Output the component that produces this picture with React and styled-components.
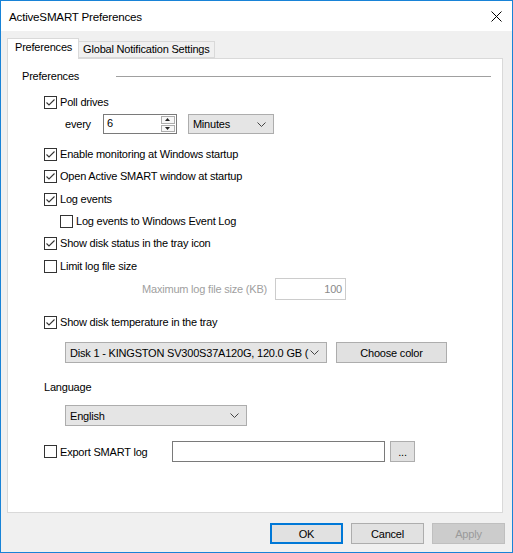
import React from 'react'
import styled, { createGlobalStyle } from 'styled-components'

const GlobalStyle = createGlobalStyle`
  body {
    margin: 0;
    background: #ffffff;
    font-family: "Liberation Sans", Arial, sans-serif;
    font-size: 11px;
    letter-spacing: -0.2px;
    color: #000;
  }
  * { box-sizing: border-box; }
`

const Window = styled.div`
  width: 513px;
  height: 553px;
  border: 1px solid #1883d7;
  background: #f0f0f0;
  display: flex;
  flex-direction: column;
`

const TitleBar = styled.div`
  height: 30px;
  background: #ffffff;
  display: flex;
  align-items: center;
  justify-content: space-between;
  padding: 0 10px 0 8px;
  font-size: 11.6px;
`

const Body = styled.div`
  padding: 7px 9px 0 6px;
  display: flex;
  flex-direction: column;
`

const TabStrip = styled.div`
  height: 20px;
  display: flex;
  align-items: flex-end;
  position: relative;
  z-index: 1;
`

const Tab = styled.div`
  height: ${(p) => (p.$active ? '21px' : '17px')};
  margin-bottom: ${(p) => (p.$active ? '-1px' : '0')};
  padding: ${(p) => (p.$active ? '2px 6px 0 7px' : '1px 4px 0 4px')};
  background: ${(p) => (p.$active ? '#ffffff' : '#f0f0f0')};
  border: 1px solid #d9d9d9;
  border-bottom: ${(p) => (p.$active ? 'none' : '1px solid #d9d9d9')};
  border-left: ${(p) => (p.$active ? '1px solid #d9d9d9' : 'none')};
  display: flex;
  align-items: flex-start;
`

const Panel = styled.div`
  height: 455px;
  background: #ffffff;
  border: 1px solid #d9d9d9;
  padding: 0 0 0 14px;
  display: flex;
  flex-direction: column;
`

const Row = styled.div`
  display: flex;
  align-items: center;
  height: ${(p) => p.$h || 22}px;
  margin-top: ${(p) => p.$mt || 0}px;
  padding-left: ${(p) => p.$indent || 0}px;
`

const GroupLine = styled.div`
  flex: 1;
  height: 1px;
  background: #a0a0a0;
  margin: 1px 11px 0 37px;
`

const Box = styled.span`
  width: 13px;
  height: 13px;
  border: 1px solid #333333;
  background: #ffffff;
  display: inline-flex;
  align-items: center;
  justify-content: center;
  flex: none;
  margin-right: 3px;
`

const Label = styled.span`
  color: ${(p) => (p.$disabled ? '#a0a0a0' : '#000')};
  margin-right: ${(p) => p.$mr || 0}px;
  width: ${(p) => (p.$w ? `${p.$w}px` : 'auto')};
  text-align: ${(p) => (p.$right ? 'right' : 'left')};
  flex: none;
`

const SpinBox = styled.div`
  width: 74px;
  height: 20px;
  border: 1px solid #7a7a7a;
  background: #ffffff;
  display: flex;
  margin-left: 12px;
`

const SpinText = styled.div`
  flex: 1;
  padding: 2px 0 0 3px;
`

const SpinButtons = styled.div`
  width: 16px;
  display: flex;
  flex-direction: column;
  padding: 1px;
  gap: 1px;
`

const SpinButton = styled.div`
  flex: 1;
  border: 1px solid #adadad;
  background: #f7f7f7;
  display: flex;
  align-items: center;
  justify-content: center;
`

const Combo = styled.div`
  width: ${(p) => p.$w}px;
  height: ${(p) => p.$h || 21}px;
  margin-left: ${(p) => p.$ml || 0}px;
  background: #e5e5e5;
  border: 1px solid #adadad;
  display: flex;
  align-items: center;
  justify-content: space-between;
  padding: 0 7px 0 4px;
  white-space: nowrap;
  overflow: hidden;
`

const Field = styled.div`
  width: ${(p) => p.$w}px;
  height: ${(p) => p.$h || 21}px;
  margin-left: ${(p) => p.$ml || 0}px;
  background: #ffffff;
  border: 1px solid ${(p) => (p.$disabled ? '#cccccc' : '#7a7a7a')};
  color: #8a8a8a;
  display: flex;
  align-items: center;
  justify-content: flex-end;
  padding-right: 3px;
`

const Button = styled.div`
  width: ${(p) => p.$w || 73}px;
  height: ${(p) => p.$h || 21}px;
  margin-left: ${(p) => p.$ml || 0}px;
  background: ${(p) => (p.$disabled ? '#cccccc' : '#e1e1e1')};
  border: ${(p) => (p.$default ? '2px solid #0078d7' : p.$disabled ? '1px solid #bfbfbf' : '1px solid #adadad')};
  color: ${(p) => (p.$disabled ? '#9a9a9a' : '#000')};
  display: flex;
  align-items: center;
  justify-content: center;
`

const Footer = styled.div`
  display: flex;
  justify-content: flex-end;
  gap: 8px;
  padding: 10px 7px 0 0;
`

const Check = () => (
  <svg width="11" height="11" viewBox="0 0 11 11">
    <polyline points="1.5,5.5 4,8 9.5,2.5" fill="none" stroke="#333" strokeWidth="1.1" />
  </svg>
)

const Chevron = () => (
  <svg width="9" height="5" viewBox="0 0 9 5" style={{ flex: 'none' }}>
    <polyline points="0.5,0.5 4.5,4.5 8.5,0.5" fill="none" stroke="#444" strokeWidth="1" />
  </svg>
)

const Arrow = ({ down }) => (
  <svg width="5" height="3" viewBox="0 0 5 3">
    <polygon points={down ? '0,0 5,0 2.5,3' : '0,3 5,3 2.5,0'} fill="#222" />
  </svg>
)

const CheckRow = ({ checked, label, indent = 22, mt, h }) => (
  <Row $indent={indent} $mt={mt} $h={h}>
    <Box>{checked && <Check />}</Box>
    <Label>{label}</Label>
  </Row>
)

const App = () => {
  return (
    <>
      <GlobalStyle />
      <Window>
        <TitleBar>
          <span>ActiveSMART Preferences</span>
          <svg width="11" height="11" viewBox="0 0 11 11">
            <line x1="0.5" y1="0.5" x2="10.5" y2="10.5" stroke="#000" strokeWidth="1" />
            <line x1="10.5" y1="0.5" x2="0.5" y2="10.5" stroke="#000" strokeWidth="1" />
          </svg>
        </TitleBar>
        <Body>
          <TabStrip>
            <Tab $active>Preferences</Tab>
            <Tab>Global Notification Settings</Tab>
          </TabStrip>
          <Panel>
            <Row $h={16} $mt={9}>
              <Label>Preferences</Label>
              <GroupLine />
            </Row>
            <CheckRow checked label="Poll drives" mt={7} />
            <Row $h={20} $mt={1} $indent={43}>
              <Label>every</Label>
              <SpinBox>
                <SpinText>6</SpinText>
                <SpinButtons>
                  <SpinButton><Arrow /></SpinButton>
                  <SpinButton><Arrow down /></SpinButton>
                </SpinButtons>
              </SpinBox>
              <Combo $w={86} $h={20} $ml={11}>
                <span>Minutes</span>
                <Chevron />
              </Combo>
            </Row>
            <CheckRow checked label="Enable monitoring at Windows startup" mt={9} />
            <CheckRow checked label="Open Active SMART window at startup" />
            <CheckRow checked label="Log events" mt={1} />
            <CheckRow label="Log events to Windows Event Log" indent={38} />
            <CheckRow checked label="Show disk status in the tray icon" />
            <CheckRow label="Limit log file size" mt={1} />
            <Row $h={22} $mt={1} $indent={100}>
              <Label $disabled $right $w={145} $mr={8}>Maximum log file size (KB)</Label>
              <Field $w={71} $h={22} $disabled>100</Field>
            </Row>
            <CheckRow checked label="Show disk temperature in the tray" mt={11} />
            <Row $h={21} $mt={9} $indent={43}>
              <Combo $w={262}>
                <span>Disk 1 - KINGSTON SV300S37A120G, 120.0 GB (</span>
                <Chevron />
              </Combo>
              <Button $w={111} $ml={9}>Choose color</Button>
            </Row>
            <Row $mt={13} $indent={22}>
              <Label>Language</Label>
            </Row>
            <Row $h={21} $mt={7} $indent={43}>
              <Combo $w={182}>
                <span>English</span>
                <Chevron />
              </Combo>
            </Row>
            <Row $h={21} $mt={15} $indent={22}>
              <Box />
              <Label $w={112}>Export SMART log</Label>
              <Field $w={213} />
              <Button $w={25} $ml={5}>...</Button>
            </Row>
          </Panel>
        </Body>
        <Footer>
          <Button $default>OK</Button>
          <Button>Cancel</Button>
          <Button $disabled>Apply</Button>
        </Footer>
      </Window>
    </>
  )
}

export default App
